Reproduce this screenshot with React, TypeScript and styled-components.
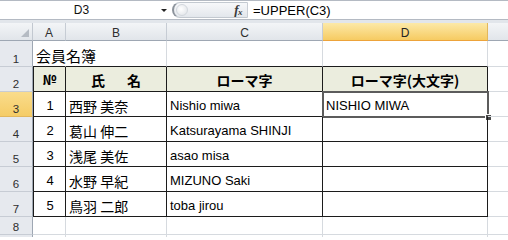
import React from 'react';
import styled, { createGlobalStyle, css } from 'styled-components';

const GlobalStyle = createGlobalStyle`
  html, body { margin: 0; padding: 0; background: #fff; overflow: hidden; }
  #root { width: 508px; height: 237px; overflow: hidden; }
`;

const Window = styled.div`
  width: 508px;
  height: 237px;
  display: flex;
  flex-direction: column;
  overflow: hidden;
  background: #fff;
`;

const FormulaBar = styled.div`
  flex-shrink: 0;
  height: 20px;
  box-sizing: border-box;
  display: flex;
  border-top: 1px solid #b4bac3;
  border-bottom: 1px solid #b4bac3;
  background: #fff;
`;

const NameBox = styled.div`
  width: 172px;
  display: flex;
  align-items: center;
  box-sizing: border-box;
  font: 12px "Liberation Sans", sans-serif;
  color: #111;
`;

const NameText = styled.span`
  flex: 1;
  text-align: center;
  padding-left: 2px;
`;

const DropArrow = styled.span`
  width: 0;
  height: 0;
  margin: 1px 5px 0 0;
  border-left: 3px solid transparent;
  border-right: 3px solid transparent;
  border-top: 3px solid #222;
`;

const Splitter = styled.div`
  margin: 1px 0;
  width: 76px;
  display: flex;
  align-items: center;
  justify-content: space-between;
  padding: 0 5px 0 2px;
  box-sizing: border-box;
  border: 1px solid #c3c9d0;
  border-left: 2px solid #8c939c;
  border-right-color: #c9ced5;
  border-radius: 9px 0 0 9px;
  background: linear-gradient(#f7f8fa, #e3e7ec);
`;

const Dimple = styled.span`
  width: 10px;
  height: 10px;
  border-radius: 50%;
  background: radial-gradient(circle at 40% 40%, #ffffff, #dde1e6);
  border: 1px solid #d2d7dd;
`;

const FxLabel = styled.span`
  font: italic 700 13px "Liberation Serif", serif;
  color: #3a3a3a;
  letter-spacing: -0.5px;
  sub {
    font-size: 9px;
    vertical-align: -1px;
  }
`;

const FormulaInput = styled.div`
  flex: 1;
  display: flex;
  align-items: center;
  padding-left: 5px;
  font: 13px "Liberation Sans", sans-serif;
  color: #000;
`;

const Band = styled.div`
  flex-shrink: 0;
  height: 3px;
  background: #e2e6eb;
`;

const Sheet = styled.div`
  flex: 1;
  display: grid;
  grid-template-columns: 33px 33px 101px 156px 165px 80px;
  grid-template-rows: 18px 26px repeat(6, 25px) 18px 25px;
  overflow: hidden;
  background: #fff;
`;

const headerBase = css`
  box-sizing: border-box;
  display: flex;
  font: 12px "Liberation Sans", sans-serif;
  color: #2e2e2e;
`;

const Corner = styled.div`
  ${headerBase};
  justify-content: flex-end;
  align-items: flex-end;
  padding: 0 3px 3px 0;
  background: linear-gradient(#f3f5f7, #e1e5ea);
  border-right: 1px solid #c2c8d0;
  border-bottom: 1px solid #9ea7b3;
`;

const ColHeader = styled.div<{ $selected?: boolean }>`
  ${headerBase};
  align-items: center;
  justify-content: center;
  padding-top: 2px;
  background: linear-gradient(#f3f5f7, #e1e5ea);
  border-right: 1px solid #c6ccd4;
  border-bottom: 1px solid #9ea7b3;
  ${p =>
    p.$selected &&
    css`
      background: linear-gradient(#fce9a8, #f6cb62);
      border-right-color: #e2b75c;
      border-bottom-color: #eda33a;
      color: #222;
    `}
`;

const RowHeader = styled.div<{ $selected?: boolean }>`
  ${headerBase};
  align-items: flex-end;
  justify-content: center;
  padding-bottom: 1px;
  font-size: 11.5px;
  background: #e6e9ee;
  border-right: 1px solid #9ea7b3;
  border-bottom: 1px solid #c7ccd4;
  ${p =>
    p.$selected &&
    css`
      background: linear-gradient(#f9dc8c, #f5cc66);
      border-bottom-color: #e2b75c;
    `}
`;

type Border = 'grid' | 'dark' | 'none';

const borderColor = (b: Border) =>
  b === 'dark' ? '#1c1c1c' : b === 'none' ? 'transparent' : '#d6dadf';

const Cell = styled.div<{
  $right?: Border;
  $bottom?: Border;
  $left?: boolean;
  $head?: boolean;
  $center?: boolean;
  $cjk?: boolean;
  $size?: number;
}>`
  position: relative;
  box-sizing: border-box;
  display: flex;
  align-items: ${p => (p.$head ? 'center' : 'flex-end')};
  justify-content: ${p => (p.$center ? 'center' : 'flex-start')};
  padding: ${p => (p.$head ? '1px 0 0 0' : '0 2px 2px 3px')};
  border-right: 1px solid ${p => borderColor(p.$right ?? 'grid')};
  border-bottom: 1px solid ${p => borderColor(p.$bottom ?? 'grid')};
  border-left: ${p => (p.$left ? '1px solid #1c1c1c' : 'none')};
  background: ${p => (p.$head ? '#ebedde' : 'transparent')};
  font-family: ${p =>
    p.$cjk ? '"Noto Sans CJK JP", sans-serif' : '"Liberation Sans", "Noto Sans CJK JP", sans-serif'};
  font-size: ${p => p.$size ?? 13}px;
  font-weight: ${p => (p.$head ? 700 : 400)};
  line-height: 16px;
  color: #000;
  white-space: nowrap;
`;

const SpreadHead = styled.span`
  letter-spacing: 4px;
  padding-left: 4px;
`;

const Selection = styled.div`
  position: absolute;
  top: -1px;
  left: -1px;
  right: -2px;
  bottom: -2px;
  border: 2px solid #5c5c5c;
  pointer-events: none;
`;

const FillHandle = styled.div`
  position: absolute;
  right: -5px;
  bottom: -5px;
  width: 5px;
  height: 5px;
  background: #4a4a4a;
  border: 1px solid #fff;
`;

type Member = { no: string; name: string; roma: string; upper: string };

const members: Member[] = [
  { no: '1', name: '西野 美奈', roma: 'Nishio miwa', upper: 'NISHIO MIWA' },
  { no: '2', name: '葛山 伸二', roma: 'Katsurayama SHINJI', upper: '' },
  { no: '3', name: '浅尾 美佐', roma: 'asao misa', upper: '' },
  { no: '4', name: '水野 早紀', roma: 'MIZUNO Saki', upper: '' },
  { no: '5', name: '鳥羽 二郎', roma: 'toba jirou', upper: '' },
];

// Column E lies beyond the visible edge, so its letter is not shown.
const columns = ['A', 'B', 'C', 'D', ''];

const EmptyRow = ({ label }: { label: string }) => (
  <>
    <RowHeader>{label}</RowHeader>
    <Cell />
    <Cell />
    <Cell />
    <Cell />
    <Cell />
  </>
);

export default function App() {
  return (
    <Window>
      <GlobalStyle />
      <FormulaBar>
        <NameBox>
          <NameText>D3</NameText>
          <DropArrow />
        </NameBox>
        <Splitter>
          <Dimple />
          <FxLabel>
            f<sub>x</sub>
          </FxLabel>
        </Splitter>
        <FormulaInput>=UPPER(C3)</FormulaInput>
      </FormulaBar>
      <Band />
      <Sheet>
        <Corner>
          <svg width="8" height="8" viewBox="0 0 8 8">
            <polygon points="8,0 8,8 0,8" fill="#b5bbc3" />
          </svg>
        </Corner>
        {columns.map((c, i) => (
          <ColHeader key={i} $selected={c === 'D'}>
            {c}
          </ColHeader>
        ))}

        {/* Row 1 */}
        <RowHeader>1</RowHeader>
        <Cell $cjk $size={15} $right="none" $bottom="dark">
          会員名簿
        </Cell>
        <Cell $bottom="dark" />
        <Cell $bottom="dark" />
        <Cell $bottom="dark" />
        <Cell />

        {/* Row 2: table header */}
        <RowHeader>2</RowHeader>
        <Cell $head $center $cjk $left $right="dark" $bottom="dark">
          №
        </Cell>
        <Cell $head $center $cjk $size={14} $right="dark" $bottom="dark">
          <SpreadHead>氏　名</SpreadHead>
        </Cell>
        <Cell $head $center $cjk $size={14} $right="dark" $bottom="dark">
          ローマ字
        </Cell>
        <Cell $head $center $cjk $size={14} $right="dark" $bottom="dark">
          ローマ字(大文字)
        </Cell>
        <Cell />

        {members.map((m, i) => (
          <React.Fragment key={m.no}>
            <RowHeader $selected={i === 0}>{i + 3}</RowHeader>
            <Cell $center $left $right="dark" $bottom="dark">
              {m.no}
            </Cell>
            <Cell $cjk $size={14} $right="dark" $bottom="dark">
              {m.name}
            </Cell>
            <Cell $right="dark" $bottom="dark">
              {m.roma}
            </Cell>
            <Cell $right="dark" $bottom="dark">
              {m.upper}
              {i === 0 && (
                <Selection>
                  <FillHandle />
                </Selection>
              )}
            </Cell>
            <Cell />
          </React.Fragment>
        ))}

        <EmptyRow label="8" />
        <EmptyRow label="" />
      </Sheet>
    </Window>
  );
}
